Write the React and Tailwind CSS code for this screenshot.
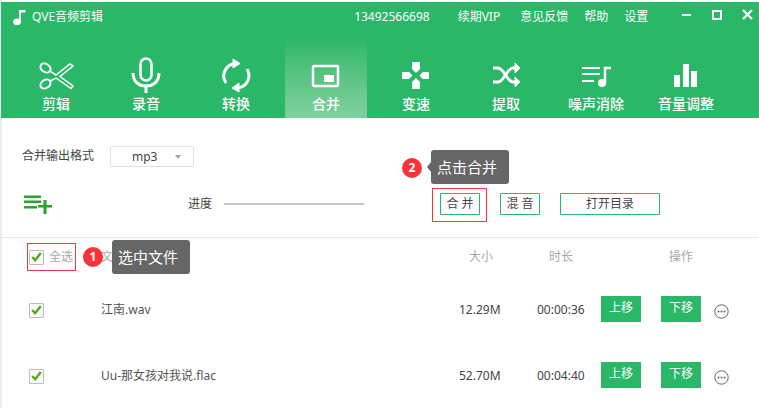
import React from "react";

const tabs = [
  { label: "剪辑", icon: "cut" },
  { label: "录音", icon: "mic" },
  { label: "转换", icon: "sync" },
  { label: "合并", icon: "merge", active: true },
  { label: "变速", icon: "pad" },
  { label: "提取", icon: "shuffle" },
  { label: "噪声消除", icon: "noise" },
  { label: "音量调整", icon: "bars" },
];

const files = [
  { name: "江南.wav", size: "12.29M", time: "00:00:36" },
  { name: "Uu-那女孩对我说.flac", size: "52.70M", time: "00:04:40" },
];

// Toolbar glyphs, all drawn on a 36x36 box
function TabIcon({ name }) {
  return (
    <svg width="36" height="36" viewBox="0 0 36 36" fill="none" stroke="white" strokeWidth="2">
      {name === "cut" && (
        <g>
          <ellipse cx="7.5" cy="11" rx="5.5" ry="4" transform="rotate(35 7.5 11)" />
          <ellipse cx="7.5" cy="27" rx="5.5" ry="4" transform="rotate(-35 7.5 27)" />
          <path d="M12 14 L18 18 L32 7 L35 9 L22 19.5 L35 29 L33 31.5 L18 21 L12 24" strokeWidth="1.5" />
        </g>
      )}
      {name === "mic" && (
        <g strokeWidth="3">
          <rect x="12.5" y="1.5" width="11" height="22" rx="5.5" strokeWidth="2.5" />
          <path d="M5 16 C5 25 11 29 18 29 C25 29 31 25 31 16" />
          <path d="M18 29 V36" />
        </g>
      )}
      {name === "sync" && (
        <g strokeWidth="3">
          <path d="M8 26 A12.5 12.5 0 0 1 17 6.5" />
          <path d="M29 12 A12.5 12.5 0 0 1 20 31" />
          <path d="M15 2 L22 6.5 L15 11 Z" fill="white" strokeWidth="1" />
          <path d="M21 26 L14 31 L21 35 Z" fill="white" strokeWidth="1" />
        </g>
      )}
      {name === "merge" && (
        <g>
          <rect x="5" y="9" width="25" height="20" strokeWidth="2.5" rx="1" />
          <rect x="16" y="18" width="10" height="7" fill="white" stroke="none" />
        </g>
      )}
      {name === "pad" && (
        <g fill="white" stroke="none">
          <path d="M14 5 H22 V12 L18 16 L14 12 Z" />
          <path d="M14 32 H22 V25 L18 21 L14 25 Z" />
          <path d="M4 15 H11 L14.5 18.5 L11 22 H4 Z" />
          <path d="M31 15 H24.5 L21.5 18.5 L24.5 22 H31 Z" />
        </g>
      )}
      {name === "shuffle" && (
        <g strokeWidth="3">
          <path d="M5 11 H10 C16 11 19 25 25 25 H28" />
          <path d="M5 25 H10 C16 25 19 11 25 11 H28" />
          <path d="M27 6 L32 11 L27 16 Z" fill="white" strokeWidth="1" />
          <path d="M27 20 L32 25 L27 30 Z" fill="white" strokeWidth="1" />
        </g>
      )}
      {name === "noise" && (
        <g strokeWidth="2">
          <path d="M4 11 H22 M4 17 H22 M4 24 H16" />
          <path d="M27 27 V11 H33" strokeWidth="2.5" />
          <circle cx="24" cy="26" r="4" fill="white" stroke="none" />
        </g>
      )}
      {name === "bars" && (
        <g fill="white" stroke="none">
          <rect x="6" y="18" width="6" height="12" />
          <rect x="15" y="7" width="6" height="23" />
          <rect x="23" y="14" width="6" height="16" />
        </g>
      )}
    </svg>
  );
}

function CheckBox() {
  return (
    <span className="flex h-[15px] w-[15px] items-center justify-center rounded-[1px] border border-[#bcbcbc] bg-[#fafafa]">
      <svg width="11" height="10" viewBox="0 0 11 10" fill="none" stroke="#5aa71c" strokeWidth="2.4">
        <path d="M1.2 5 L4.2 8.2 L9.8 1" />
      </svg>
    </span>
  );
}

function Badge({ n }) {
  return (
    <span className="flex h-5 w-5 items-center justify-center rounded-full bg-[#f8333a] text-[12px] font-bold text-white">
      {n}
    </span>
  );
}

function FileRow({ file }) {
  return (
    <div className="flex h-[66px] items-center text-[12px] text-[#444]">
      <div className="mt-[2px] w-[101px] pl-[29px]">
        <CheckBox />
      </div>
      <div className="w-[358px] pt-[2px] text-[#555]">{file.name}</div>
      <div className="w-[78px] pt-[2px]">{file.size}</div>
      <div className="w-[64px] pt-[2px]">{file.time}</div>
      <button className="h-[26px] w-10 bg-[#2ab768] pb-[2px] text-[12px] text-white">上移</button>
      <button className="ml-5 h-[26px] w-10 bg-[#2ab768] pb-[2px] text-[12px] text-white">下移</button>
      <svg className="ml-[13px] mt-[4px]" width="15" height="15" viewBox="0 0 15 15" fill="none">
        <circle cx="7.5" cy="7.5" r="6.7" stroke="#666" strokeWidth="1" />
        <circle cx="4.5" cy="7.5" r="1" fill="#666" />
        <circle cx="7.5" cy="7.5" r="1" fill="#666" />
        <circle cx="10.5" cy="7.5" r="1" fill="#666" />
      </svg>
    </div>
  );
}

export default function App() {
  return (
    <div className="relative h-[408px] w-[759px] overflow-hidden bg-white pt-[2px] font-['Noto_Sans','Noto_Sans_CJK_SC',sans-serif] shadow-[inset_2px_0_0_#e8edf2]">
      {/* Green header */}
      <div className="ml-[1px] h-[116px] bg-[#2ab768] text-white">
        <div className="flex h-[30px] items-center text-[12px]">
          <svg className="ml-[12px]" width="13" height="16" viewBox="0 0 13 16" fill="white">
            <path d="M6 1 H12.5 V3.5 H8 V12.5 A4 3.4 0 1 1 6 10 Z" />
          </svg>
          <span className="ml-[6px]">QVE音频剪辑</span>
          <span className="ml-[251px]">13492566698</span>
          <span className="ml-[28px]">续期VIP</span>
          <span className="ml-[20px]">意见反馈</span>
          <span className="ml-[16px]">帮助</span>
          <span className="ml-[16px]">设置</span>
          <div className="mb-[4px] ml-[34px] h-[2px] w-[9px] bg-white" />
          <div className="mb-[5px] ml-[21px] h-[10px] w-[10px] border-2 border-white" />
          <svg className="mb-[5px] ml-[20px]" width="11" height="11" viewBox="0 0 11 11" stroke="white" strokeWidth="2.2">
            <path d="M1 1 L10 10 M10 1 L1 10" />
          </svg>
        </div>
        <div className="ml-[10px] flex h-[86px] pt-[6px]">
          {tabs.map((t) => (
            <div
              key={t.label}
              className={`flex w-[90px] flex-col items-center ${t.active ? "relative" : ""}`}
            >
              {t.active && (
                <div className="absolute bottom-0 left-1 top-0 w-[82px] bg-gradient-to-b from-[#2ab768] to-[#7fd19f]" />
              )}
              <div className="relative mt-[19px]">
                <TabIcon name={t.icon} />
              </div>
              <div className="relative mt-[1px] text-[14px] font-medium leading-[20px]">{t.label}</div>
            </div>
          ))}
        </div>
      </div>

      {/* Format and actions */}
      <div className="flex h-[120px] flex-col border-b border-[#e8e8e8] pl-[22px]">
        <div className="mt-[28px] flex h-[21px] items-center text-[12px] text-[#444]">
          <span className="mb-[2px] w-[88px]">合并输出格式</span>
          <div className="flex h-[21px] w-[84px] items-center rounded-[2px] border border-[#e4e4e4] pl-[21px] text-[12px]">
            mp3
            <span className="ml-[18px] h-0 w-0 border-x-[3px] border-t-[4px] border-x-transparent border-t-[#99a3ad]" />
          </div>
        </div>
        <div className="mt-[26px] flex h-[22px] items-center text-[12px] text-[#444]">
          <svg className="ml-[2px]" width="28" height="19" viewBox="0 0 28 19" fill="#2f9e33">
            <rect x="0" y="0.5" width="17" height="2.5" />
            <rect x="0" y="5.5" width="17" height="2.5" />
            <rect x="0" y="11" width="13" height="2.5" />
            <rect x="14" y="10" width="14" height="2.5" />
            <rect x="19.5" y="5" width="3" height="14" />
          </svg>
          <span className="ml-[136px] w-[36px]">进度</span>
          <div className="h-[2px] w-[140px] bg-[#c6c6c6]" />
          <button className="ml-[76px] h-[22px] w-10 rounded-[1px] border border-[#2ab768] text-[12px]">合 并</button>
          <button className="ml-5 h-[22px] w-10 rounded-[1px] border border-[#2ab768] text-[12px]">混 音</button>
          <button className="ml-5 h-[22px] w-[100px] rounded-[1px] border border-[#2ab768] text-[12px]">打开目录</button>
        </div>
      </div>

      {/* File table */}
      <div className="flex h-[38px] items-center text-[12px] text-[#a8a8a8]">
        <div className="flex w-[101px] items-center pl-[29px]">
          <CheckBox />
          <span className="ml-[5px]">全选</span>
        </div>
        <div className="w-[368px]">文件名</div>
        <div className="w-[80px]">大小</div>
        <div className="w-[120px]">时长</div>
        <div>操作</div>
      </div>
      {files.map((f) => (
        <FileRow key={f.name} file={f} />
      ))}

      {/* Tutorial annotations laid over the page */}
      <div className="absolute left-[27px] top-[243px] h-[28px] w-[49px] border border-[#f03a3a]" />
      <div className="absolute left-[83px] top-[247px]"><Badge n="1" /></div>
      <div className="absolute left-[112px] top-[240px] h-[34px] w-[78px] rounded-[3px] bg-[#666666] pl-[6px] text-[15px] leading-[34px] text-white">
        选中文件
      </div>
      <div className="absolute left-[432px] top-[188px] h-[34px] w-[55px] border border-[#f03a3a]" />
      <div className="absolute left-[402px] top-[158px]"><Badge n="2" /></div>
      <div className="absolute left-[431px] top-[150px] h-[34px] w-[78px] rounded-[3px] bg-[#666666] pl-[6px] text-[15px] leading-[34px] text-white">
        <span className="absolute left-[-4px] top-[12px] h-0 w-0 border-y-[5px] border-r-[4px] border-y-transparent border-r-[#666666]" />
        点击合并
      </div>
    </div>
  );
}
